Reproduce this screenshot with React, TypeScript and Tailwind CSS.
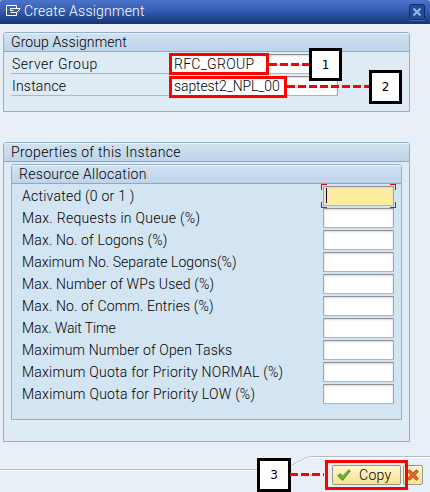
import type { ReactNode } from "react";

const field =
  "rounded-[1px] border border-t-[#8f9196] border-x-[#a2a4a8] border-b-[#b4b5b8] shadow-[inset_0_1px_2px_#d5d5dc]";

const rows = [
  { label: "Activated (0 or 1 )", tracking: "tracking-[0.24px]" },
  { label: "Max. Requests in Queue (%)", tracking: "tracking-[0.3px]" },
  { label: "Max. No. of Logons (%)", tracking: "tracking-[0.15px]" },
  { label: "Maximum No. Separate Logons(%)", tracking: "tracking-[0.05px]" },
  { label: "Max. Number of WPs Used (%)", tracking: "tracking-[0.15px]" },
  { label: "Max. No. of Comm. Entries (%)", tracking: "tracking-[0.15px]" },
  { label: "Max. Wait Time", tracking: "tracking-[-0.1px]" },
  { label: "Maximum Number of Open Tasks", tracking: "tracking-[0.15px]" },
  { label: "Maximum Quota for Priority NORMAL (%)", tracking: "tracking-[0.23px]" },
  { label: "Maximum Quota for Priority LOW (%)", tracking: "tracking-[0.24px]" },
];

function Heading({ children, className }: { children: ReactNode; className: string }) {
  return (
    <h2
      className={`h-[19px] rounded-t-[2px] border-b border-[#8aa8ca] bg-linear-to-b from-[#d2e2f0] to-[#bdd4ea] pl-[7px] leading-[18px] font-light shadow-[inset_0_1px_0_#e8f2fa] ${className}`}
    >
      {children}
    </h2>
  );
}

function Callout({ n, className }: { n: number; className: string }) {
  return (
    <div
      className={`absolute flex items-center justify-center border-3 border-black bg-white font-['DejaVu_Sans',sans-serif] text-[12px] font-normal ${className}`}
    >
      {n}
    </div>
  );
}

function Dashes({ width, className }: { width: number; className: string }) {
  return (
    <svg className={`absolute ${className}`} width={width} height="3">
      <path d={`M0 1.5H${width}`} stroke="#ff0000" strokeWidth="3" strokeDasharray="8 3" />
    </svg>
  );
}

function Corners() {
  return (
    <svg
      className="absolute -left-[3px] -top-[3px]"
      width="75"
      height="24"
      fill="none"
      stroke="#e00010"
      shapeRendering="crispEdges"
    >
      <path d="M.5 6V.5H6M69 .5H74.5V6M.5 18V23.5H6M69 23.5H74.5V18" />
    </svg>
  );
}

export default function App() {
  return (
    <div className="relative flex h-[492px] w-[430px] flex-col overflow-hidden bg-[#e8eff7] font-[Roboto,'Liberation_Sans',sans-serif] text-[14px] font-light text-black">
      <header className="flex h-6 shrink-0 items-center rounded-t-[2px] bg-linear-to-b from-[#4b74ca] via-[#3259ae] to-[#183474] pl-[6px] pr-[5px] text-white">
        <svg width="16" height="12" viewBox="0 0 16 12" fill="none" stroke="white" className="-mt-[3px]">
          <path d="M10.5 3V.5H.5V10.5H10.5V8M4.5 3.5H14.2L10.8 7.5H4.5M4.5 3.5V5.5H7.5" />
        </svg>
        <h1 className="-mt-[2px] ml-[2px] leading-5 tracking-[0.22px]">Create Assignment</h1>
        <button aria-label="Close" className="ml-auto flex h-4 w-4 items-center justify-center rounded-[2px] border border-[#142f68] bg-[#254993] shadow-[0_1px_0_#4567aa]">
          <svg width="10" height="10" viewBox="0 0 10 10">
            <path d="M1.5 1.5L8.5 8.5M8.5 1.5L1.5 8.5" stroke="#8fb5f5" strokeWidth="2.2" />
          </svg>
        </button>
      </header>

      <section className="ml-[3px] mt-2 h-20 w-[407px] shrink-0 rounded-t-[3px] border border-[#91afcc] bg-[#dfebf4]">
        <Heading className="tracking-[0.1px]">Group Assignment</Heading>
        <div className="mt-[2px] flex flex-col gap-[2px] pl-[7px]">
          <div className="flex h-5 w-[327px]">
            <div className="w-[158px] border-b border-[#b2b7bd] pl-px leading-[20px] tracking-[0.5px]">Server Group</div>
            <div className={`flex-1 bg-white pl-[4px] leading-[19px] tracking-[0.3px] ${field}`}>RFC_GROUP</div>
          </div>
          <div className="flex h-5 w-[327px]">
            <div className="w-[158px] border-b border-[#b2b7bd] pl-px leading-[20px] tracking-[0.2px]">Instance</div>
            <div className={`flex-1 bg-white pl-[4px] leading-[19px] tracking-[-0.1px] ${field}`}>saptest2_NPL_00</div>
          </div>
        </div>
      </section>

      <section className="ml-[3px] mt-[30px] h-[300px] w-[407px] shrink-0 rounded-t-[3px] border border-[#91afcc] bg-[#dfebf4]">
        <Heading className="tracking-[0.33px]">Properties of this Instance</Heading>
        <div className="ml-[7px] mt-[2px] h-[256px] w-[391px] rounded-t-[3px] border border-[#91afcc] bg-[#d3e4f2]">
          <Heading className="tracking-[0.3px]">Resource Allocation</Heading>
          <div className="mt-[2px] flex flex-col gap-[2px] pl-[10px] pr-[7px]">
            {rows.map((row, i) => (
              <label key={row.label} className="flex h-5 items-center justify-between">
                <span className={`leading-5 ${row.tracking}`}>{row.label}</span>
                <span className={`relative h-5 w-[71px] ${i === 0 ? "bg-[#ffed9f]" : "bg-white"} ${field}`}>
                  {i === 0 && (
                    <>
                      <span className="ml-[2px] mt-[1px] block h-[15px] w-px bg-[#000040]" />
                      <Corners />
                    </>
                  )}
                </span>
              </label>
            ))}
          </div>
        </div>
      </section>

      <footer className="relative mt-[12px] flex h-[38px] shrink-0 justify-end pr-[7px] pt-[11px]">
        <svg className="absolute left-0 top-0" width="430" height="38" fill="none">
          <path d="M0 15.5H283C291 13 295 9 302 6C307 3 310 2.5 315 2.5H430" stroke="#aebccb" />
          <path d="M0 16.5H283C291 14 295 10 302 7C307 4 310 3.5 315 3.5H430" stroke="#ffffff" />
        </svg>
        <div className="relative flex gap-[2px]">
          <button className="flex h-5 w-[69px] items-center rounded-[2px] border border-[#9b968b] bg-linear-to-b from-[#fff6cd] to-[#f9e38e] pl-[4px]">
            <svg width="14" height="12" viewBox="0 0 14 12">
              <path d="M.7 6.7L3.3 4.6L5.6 7.2L11.8 .7L13.3 2L6 11.2H5Z" fill="#6cb52d" stroke="#428327" strokeWidth=".8" />
            </svg>
            <span className="ml-[8px] tracking-[0.3px]">Copy</span>
          </button>
          <button aria-label="Cancel" className="flex h-5 w-5 items-center justify-center rounded-[2px] border border-[#9b968b] bg-linear-to-b from-[#fff6cd] to-[#f9e38e]">
            <svg width="12" height="12" viewBox="0 0 12 12">
              <path d="M2.5 .7L6 3.8L9.5 .7L11.4 2.6L8.3 6L11.4 9.5L9.5 11.4L6 8.3L2.5 11.4L.6 9.5L3.7 6L.6 2.6Z" fill="#e4652c" stroke="#a84721" strokeWidth=".8" />
            </svg>
          </button>
        </div>
      </footer>

      <div className="absolute left-[169px] top-[53px] h-[22px] w-[100px] border-3 border-[#ff0000]" />
      <div className="absolute left-[169px] top-[76px] h-[22px] w-[118px] border-3 border-[#ff0000]" />
      <div className="absolute left-[325px] top-[460px] h-[30px] w-[83px] border-3 border-[#ff0000]" />
      <Dashes width={42} className="left-[269px] top-[63px]" />
      <Dashes width={84} className="left-[287px] top-[85px]" />
      <Callout n={1} className="left-[309px] top-[48px] h-[33px] w-[33px]" />
      <Callout n={2} className="left-[369px] top-[70px] h-[34px] w-[33px]" />
      <Callout n={3} className="left-[257px] top-[458px] h-[34px] w-[34px]" />
      <Dashes width={34} className="left-[290px] top-[473px]" />
    </div>
  );
}
